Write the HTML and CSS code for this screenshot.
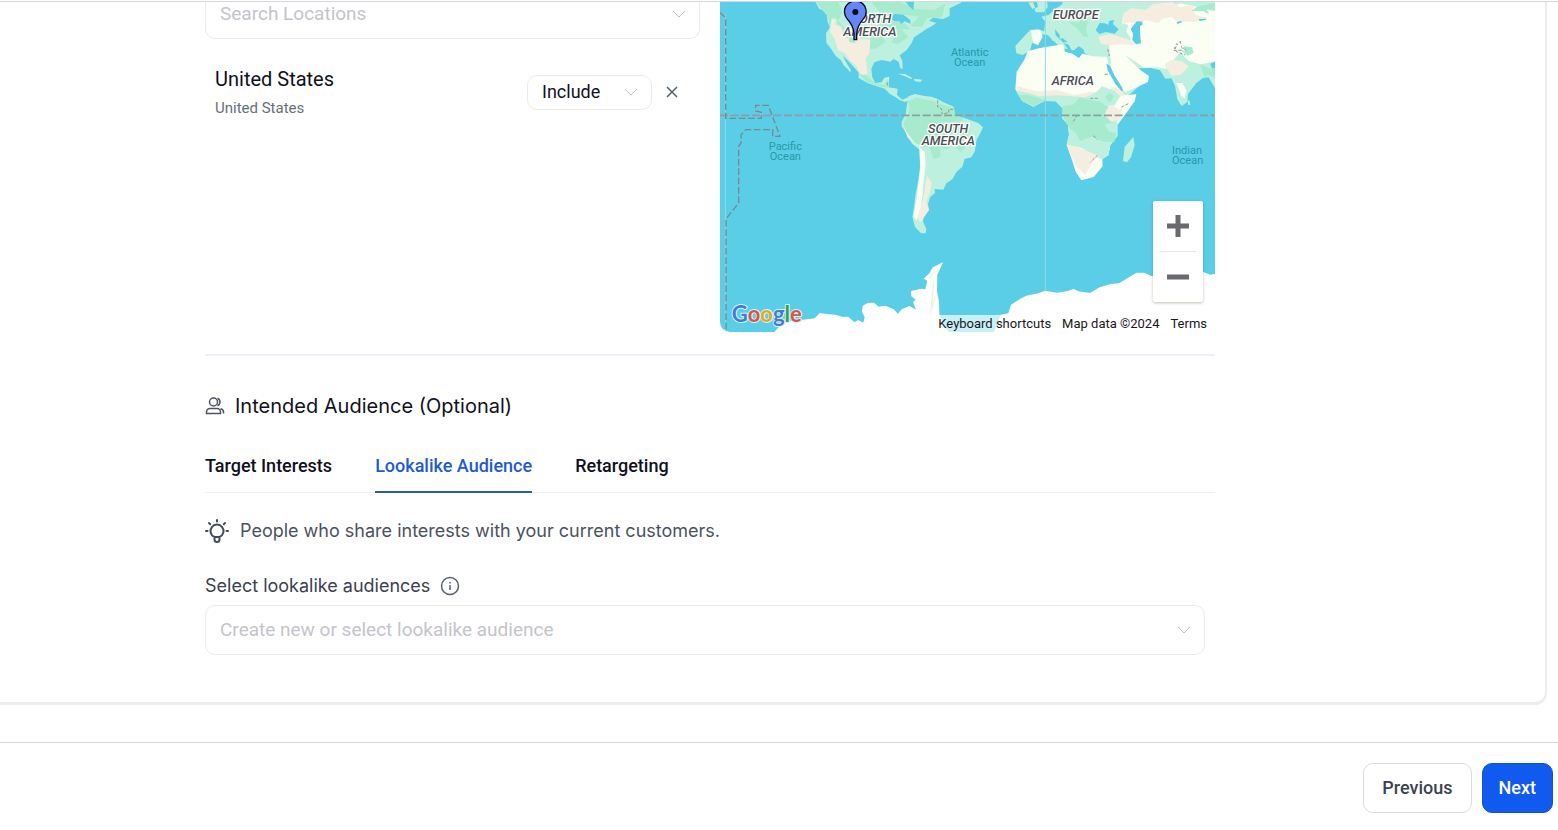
FILE: index.html
```html
<!DOCTYPE html>
<html lang="en">
<head>
<meta charset="utf-8">
<meta name="viewport" content="width=device-width, initial-scale=1">
<title>Intended Audience</title>
<link rel="stylesheet" href="styles.css">
</head>
<body>
<main class="scroll-area">
  <div class="card">
    <div class="content">
      <section class="locations">
        <div class="location-list">
          <div class="select-box search-box">
            <select class="select placeholder" aria-label="Search Locations"><option>Search Locations</option></select>
            <svg class="chevron" viewBox="0 0 14 14" aria-hidden="true"><path d="M1 4l6 6 6-6"/></svg>
          </div>
          <div class="location">
            <div class="location-name">
              <div class="name">United States</div>
              <div class="region">United States</div>
            </div>
            <div class="select-box include-box">
              <select class="select" aria-label="Include or exclude"><option>Include</option><option>Exclude</option></select>
              <svg class="chevron" viewBox="0 0 14 14" aria-hidden="true"><path d="M1 4l6 6 6-6"/></svg>
            </div>
            <button class="remove" type="button" aria-label="Remove location"><svg viewBox="0 0 12 12"><path d="M1 1l10 10M11 1L1 11"/></svg></button>
          </div>
        </div>
        <div class="map">
          <svg class="map-art" viewBox="15 6 1485 990" preserveAspectRatio="xMidYMid slice" role="img" aria-label="World map">
            <rect class="water" x="0" y="0" width="1520" height="1010"/>
            <!-- North America -->
            <path class="mint" d="M298 0L312 26L322 30L336 46L337 64L345 82L333 100L334 128L349 148L362 168L378 181L386 196L398 207L405 217L408 211L398 195L388 177L384 168L397 180L413 197L431 218L431 234L459 250L490 260L509 266L525 282L541 291L555 301L570 306L584 300L579 292L562 299L546 285L548 266L520 262L523 230L508 233L500 247L481 249L472 232L469 206L478 187L500 180L526 185L536 177L551 185L556 205L563 206L562 183L554 166L575 150L590 129L597 112L618 98L633 88L651 78L664 69L642 62L655 53L684 57L704 48L704 25L738 8L738 0Z"/>
            <path class="green" d="M302 6L370 6L382 38L366 68L378 82L404 107L408 125L452 121L463 158L466 103L505 55L530 62L560 60L585 88L540 88L502 110L512 125L485 145L459 148L436 98L392 89L359 50L344 77L338 48Z"/>
            <path class="green" d="M470 6H555L600 26L658 30L692 10L680 52L635 55L622 80L585 78L612 50L570 44L532 52L500 42Z"/>
            <path class="beige" d="M350 55L363 60L360 75L378 79L386 110L402 116L410 101L429 100L438 117L466 119L464 157L452 176L458 221L438 225L423 196L403 181L390 160L369 150L359 116L345 96Z"/>
            <path class="green" d="M402 107L413 104L422 130L402 126ZM430 221L456 227L481 250L509 255L518 238L523 263L500 261L457 247ZM553 82L580 110L548 133L530 127Z"/>
            <path class="water" d="M522 54l15-12 28 2 20 15 2 12-18-7-11 8-5-9-14 1zM597 6l-2 24-13-11-10-13z"/>
            <path class="mint" d="M549 221l21 1 22 12-4 3-18-8zM597 236l25 3-6 7-17-2z"/>
            <!-- South America -->
            <path class="mint" d="M577 306L580 289L600 282L628 288L650 290L666 296L684 306L716 320L720 344L750 355L790 369L804 382L796 400L785 419L779 455L769 472L749 477L742 500L725 515L712 538L694 550L685 569L659 567L660 579L646 591L639 612L642 630L627 648L624 665L634 687L632 700L618 700L600 681L592 650L597 620L602 581L610 540L615 500L614 449L591 431L575 402L560 379L560 365L572 343Z"/>
            <path class="green" d="M578 304L604 293L651 302L675 312L717 324L720 344L746 355L728 373L747 380L765 396L748 425L752 443L735 455L716 434L694 450L676 440L676 471L656 477L644 443L600 430L574 395L565 371L578 345L584 324Z"/>
            <path class="cream" d="M613 442L629 455L632 494L623 568L623 584L615 637L604 662L596 648L605 595L609 560L616 508Z"/>
            <path class="beige" d="M563 373L573 394L599 428L618 441L603 434L578 413ZM636 528L650 549L643 581L633 605L642 630L617 666L606 655L624 601Z"/>
            <!-- Europe and Asia -->
            <path class="mint" d="M940 8l14-2 6 17-8 4zM965 0h31l2 22-12 15-24 0-4-10 11-7zM945 90l24-3 18 7 4-29-12-15 23-6 20-18 18-12 7-14H1500V184l-14 8 14 38v35l-19-33-17 2-20 15-25 33-2 24-17 12-13-20-7-41-11-22-18 1-16-25-28-7-36 1-19-11-24-1-27-37 35 22 14 33 32 14 3 22-39 35-44 17-15-28-28-36 8-21-4-37-29-3-25-14-4-13-14-8-14 12-8 0-11-24-13-11-16-17-9-11 2 18 24 23 12 18-19-2-29-28-12-12-18-2-16 26-13 1-5 21-23 14-19-5-3-22z"/>
            <path class="cream" d="M1183 130L1202 132L1240 133L1247 113L1234 95L1240 75L1221 70L1224 48L1263 32L1315 39L1350 25L1397 10L1500 34V184L1457 193L1421 183L1395 157L1371 186L1352 207L1325 202L1287 203L1257 182L1229 165L1279 212L1302 228L1299 246L1265 262L1230 277L1211 250L1185 209L1188 185L1183 143Z"/>
            <path class="beige" d="M1150 110l34-8 45 13 32 10-6 10-33-3-36 3-28-3zM1225 40l24-15 43 4 21-16 58-6 26 15 36-7 8 29 35 10-34 11-56 0-18-15-28 7-10 13-38-10-22 12-26-6-20 7zM1348 193l21-13 30 3 22 15-12 14-12 12-27 3-11-16z"/>
            <path class="green" d="M1060 65l32 3 8-14 20 3-7 33 7 22-14-3-18-23zM1430 32l20-14 50-9v22l-25-3 7 15-18-10zM1455 193l31 13 13-3v31l-19-9-11 7zM1395 149l14-10 22 3 5 17-18 8z"/>
            <path class="cream" d="M948 91h28l7 19-14 26-13-6-5-16zM1383 249l19 0 13 23-7 24-10-10-11-31z"/>
            <path class="water" d="M1142 91l12-22 16 1 10 5 2-12 15-3-3 12 17 16-12 13-26-5-20 6zM1256 75l10-11 16 1 1 9-8 4 0 18 3 34-15 3-11-13 2-19-7-14zM1385 66l14-3 2 4-14 5zM1451 57l24-1-2 4-19 3z"/>
            <path class="mint" d="M1007 88l10 1 3 31-9 2zM1034 104l9-1-2 14-7-2zM1044 126l27 2-4 8-16-5zM1126 149l22 1-2 5-20-3zM1418 299l6 5 2 11-6 0z"/>
            <!-- Africa -->
            <path class="cream" d="M938 154L971 145L1044 133L1050 155L1072 161L1092 174L1102 161L1134 169L1176 171L1180 194L1195 231L1213 260L1221 286L1264 283L1259 304L1229 346L1207 375L1207 408L1186 436L1180 466L1162 477L1163 499L1136 531L1099 541L1082 515L1071 480L1055 435L1062 404L1059 374L1042 355L1044 326L1022 304L988 303L955 320L921 302L901 267L905 215L928 179Z"/>
            <path class="beige" d="M903 257l27 8 36 9 60-4 50 15 50-9 46-1 22-15 29 12 4 15-23 13-1 25-42 20-80-25-72-26-54-6-45-16z"/>
            <path class="mint" d="M901 270l35 8 35 11 60-3 80 6 30-13 20-20 39 14 15 15-16 28-18 0-5 22-13 11 26-5 18 0 0 30 0 33-21 29-6 29-18 12-24-5-37-28-46-10 7-30-3-30-17-19 2-29-22-22-34-1-33 17-34-18-20-32z"/>
            <path class="green" d="M910 284l33 2 48 15-36 18-34-18zM1042 338l0-20 32-4 19-21 62 12 24 17-11 24 26 19-25 9 12 20 22 6-4 25-33 0-37-15-34 13-12-23-19-15-17-31zM1170 292l14-14 13 12-12 18z"/>
            <path class="beige" d="M1056 435l37 8 32 14 29 11-20 14-23 42-25-22-14-26zM1175 328l21-9 26 5-5 34-28 7-20-19z"/>
            <path class="mint" d="M1255 411l-15 17-11 12-5 43 12 4 12-15 11-37z"/>
            <path class="water" d="M1174 190l12 9 13 28 22 35 3 13-7-4-16-19-23-41z"/>
            <path class="cream" d="M1219 288l44-3-16 24-34 21-17-11z"/>
            <!-- Antarctica -->
            <path class="snow" d="M175 1000L192 980L217 963L260 960L299 955L314 939L340 943L361 944L382 950L399 950L419 967L430 960L445 968L449 951L441 936L443 917L458 909L477 908L491 920L511 917L536 928L549 941L560 928L583 918L603 929L594 906L602 899L589 889L588 873L619 866L631 868L637 842L626 836L643 820L653 802L684 787L667 824L666 872L672 906L673 941L688 980L706 1000ZM835 1000L857 944L880 940L888 914L915 897L934 887L970 880L990 872L1027 878L1058 873L1076 867L1090 874L1125 879L1154 862L1187 852L1212 850L1237 835L1265 818L1288 818L1310 829L1465 816L1485 824L1500 822V1000Z"/>
            <path class="land-detail" d="M642 836l22-24m-8 30l-8 98m12-50l-12 44"/>
            <!-- Boundaries and grid -->
            <path class="meridian" d="M31 42V996M991 6V872"/>
            <path class="equator" d="M15 346H1500"/>
            <path class="boundary" d="M15 38l17 15v302h107v-18l-17-4v-17h38l35 93h-22v-20h-80l-15 15v25l-7 10v170l-38 48v331"/>
            <path class="border-line" d="M668 301l0 20 12 6 1 15 21-4-1-10 16 0M516 247l2 11M1178 148l5 20M1169 223h15M1376 151l22 0m-11-23l-9 13 6 14 27 10m-32-18l16-24 5 19 14 10M1087 345l-15 25M1126 295h22M1136 407l10 12M1148 465l-22 22M1240 311l-24 12"/>
            <path class="shore" d="M1375 143l8-17 15 9-3 10 15 7"/>
            <g class="continent">
              <text x="407" y="69">NORTH</text><text x="385" y="108">AMERICA</text>
              <text x="639" y="398">SOUTH</text><text x="620" y="434">AMERICA</text>
              <text x="1013" y="58">EUROPE</text><text x="1010" y="254">AFRICA</text>
            </g>
            <g class="ocean">
              <text x="211" y="451">Pacific</text><text x="211" y="481">Ocean</text>
              <text x="764" y="168">Atlantic</text><text x="764" y="198">Ocean</text>
              <text x="1416" y="461">Indian</text><text x="1418" y="491">Ocean</text>
            </g>
            <path class="pin" d="M417 119V99C414 79 407 67 396 56C388 47 386 31 392 20C406-3 438-2 450 20C456 34 454 48 444 58C433 70 427 84 425 101V119Z"/>
            <circle class="pin-dot" cx="421" cy="36" r="9"/>
            <text class="google" x="50" y="967"><tspan class="g-blue">G</tspan><tspan class="g-red">o</tspan><tspan class="g-yellow">o</tspan><tspan class="g-blue">g</tspan><tspan class="g-green">l</tspan><tspan class="g-red">e</tspan></text>
          </svg>
          <div class="zoom-control">
            <button type="button" aria-label="Zoom in"><svg viewBox="0 0 24 24"><path d="M1 12h22M12 1v22"/></svg></button>
            <button type="button" aria-label="Zoom out"><svg viewBox="0 0 24 24"><path d="M1 12h22"/></svg></button>
          </div>
          <div class="map-credits">
            <button type="button">Keyboard shortcuts</button><span>Map data ©2024</span><a href="#terms">Terms</a>
          </div>
        </div>
      </section>

      <section class="audience">
        <h2 class="heading">
          <svg class="people" viewBox="0 0 20 20" aria-hidden="true"><circle cx="8.500" cy="6" r="4"/><path d="M12.500 2.300a4 4 0 0 1 0 7.400M1.500 17.500v-1.500a3.500 3.500 0 0 1 3.500-3.500h7a3.500 3.500 0 0 1 3.500 3.500v1.500zM15.500 12.800c2 .5 3 1.700 3 3.200v1.500"/></svg>
          Intended Audience (Optional)
        </h2>
        <div class="tabs" role="tablist">
          <button class="tab" role="tab" type="button">Target Interests</button>
          <button class="tab active" role="tab" type="button" aria-selected="true">Lookalike Audience</button>
          <button class="tab" role="tab" type="button">Retargeting</button>
        </div>
        <p class="hint">
          <svg class="bulb" viewBox="0 0 24 24" aria-hidden="true"><path d="M12 1v1.500M1 12h1.500M21.500 12H23M4 4l1.200 1.200M20 4l-1.200 1.200M9.500 18a6.500 6.500 0 1 1 5 0M9.500 18h5v2.500a2.500 2.500 0 0 1-5 0z"/></svg>
          People who share interests with your current customers.
        </p>
        <div class="field-label">
          <label for="lookalike">Select lookalike audiences</label>
          <svg class="info" viewBox="0 0 20 20" aria-hidden="true"><circle cx="10" cy="10" r="8.500"/><path d="M10 9v5M10 6v1.500"/></svg>
        </div>
        <div class="select-box audience-box">
          <select class="select placeholder" id="lookalike"><option>Create new or select lookalike audience</option></select>
          <svg class="chevron" viewBox="0 0 14 14" aria-hidden="true"><path d="M1 4l6 6 6-6"/></svg>
        </div>
      </section>
    </div>
  </div>
</main>
<footer class="actions">
  <button class="btn" type="button">Previous</button>
  <button class="btn primary" type="button">Next</button>
</footer>
</body>
</html>
```

FILE: styles.css
```css
* { box-sizing: border-box; }
body {
  margin: 0;
  padding-top: 1px;
  min-height: 100vh;
  display: flex;
  flex-direction: column;
  background: #fff;
  color: #101020;
  font-family: Roboto, "Liberation Sans", sans-serif;
}
button, select { font: inherit; color: inherit; }
button { padding: 0; border: 0; background: none; }
svg { fill: none; flex: none; }
.scroll-area { flex: 1; border-top: 1px solid #d5d7da; padding: 0 11px 37px 0; }
.card {
  border-right: 2px solid #ebecef;
  border-bottom: 3px solid #ebecef;
  border-radius: 0 0 12px 0;
  padding: 0 330px 47px 205px;
}
.content { max-width: 1010px; }
.locations { display: flex; gap: 20px; padding-bottom: 22px; border-bottom: 2px solid #efeffb; }
.location-list, .map { flex: 1; min-width: 0; }

.select-box { position: relative; border: 1px solid #ebebe6; border-radius: 10px; }
.select {
  display: block;
  width: 100%;
  height: 100%;
  padding: 0 40px 2px 14px;
  border: 0;
  background: transparent;
  appearance: none;
  font-size: 18px;
}
.placeholder { color: #c4c4cb; font-size: 19px; }
.chevron {
  position: absolute;
  right: 13px;
  top: 50%;
  width: 14px;
  height: 14px;
  margin-top: -7px;
  stroke: #bbbec4;
  pointer-events: none;
}
.search-box { height: 37px; border-top: 0; border-radius: 0 0 10px 10px; }
.search-box .select { padding-bottom: 13px; }
.search-box .chevron { top: 12px; margin-top: -7px; }
.location { display: flex; align-items: center; padding: 26px 22px 0 10px; }
.location-name { flex: 1; }
.name { font-size: 20px; line-height: 28px; }
.region { margin-top: 4px; font-size: 15px; line-height: 22px; color: #667078; }
.include-box { width: 125px; height: 35px; }
.remove { margin-left: 14px; width: 12px; height: 12px; display: flex; }
.remove svg { width: 12px; height: 12px; stroke: #566170; stroke-width: 1.500; }

.map { position: relative; height: 330px; border-radius: 0 0 0 10px; overflow: hidden; }
.map-art { display: block; width: 100%; height: 100%; }
.water { fill: #59cee6; }
.mint { fill: #bdf0de; }
.green { fill: #a6ebcd; }
.beige { fill: #f5eee0; }
.cream { fill: #fbfef2; }
.snow { fill: #fff; }
.land-detail { stroke: #edf3e4; stroke-width: 4; }
.meridian { stroke: #8bdde6; stroke-width: 3; }
.equator { stroke: #8ca0a1; stroke-width: 5; stroke-dasharray: 24 8; }
.boundary { stroke: #7b888b; stroke-width: 4; stroke-dasharray: 20 8; }
.border-line { stroke: #919894; stroke-width: 3; stroke-dasharray: 9 5; }
.shore { stroke: #fff; stroke-width: 4; }
.continent { font: italic 500 38px Roboto, sans-serif; fill: #4a4e53; stroke: #fff; stroke-width: 8; paint-order: stroke; }
.ocean { font: 400 33px Roboto, sans-serif; fill: #2699a8; text-anchor: middle; }
.pin { fill: #6387f5; stroke: #080818; stroke-width: 4; }
.pin-dot { fill: #080818; }
.google { font: 700 66px Lato, sans-serif; stroke: #d8f7fb; stroke-width: 6; paint-order: stroke; }
.g-blue { fill: #4579d8; }
.g-red { fill: #df5144; }
.g-yellow { fill: #e9a817; }
.g-green { fill: #389b5a; }
.zoom-control {
  position: absolute;
  right: 12px;
  bottom: 30px;
  width: 50px;
  display: flex;
  flex-direction: column;
  background: #fff;
  border-radius: 2px;
  box-shadow: 0 1px 3px rgb(80 70 40 / 35%);
}
.zoom-control button { height: 50px; display: flex; align-items: center; justify-content: center; }
.zoom-control button + button { height: 51px; }
.zoom-control button + button::before { content: ""; position: absolute; top: 50px; left: 6px; right: 7px; border-top: 1px solid #e8e7e2; }
.zoom-control svg { width: 24px; height: 24px; stroke: #69696f; stroke-width: 5; }
.map-credits {
  position: absolute;
  right: 0;
  bottom: 0;
  display: flex;
  gap: 11px;
  padding: 0 8px 0 5px;
  background: rgb(255 255 255 / 68%);
  font-size: 13px;
  line-height: 17px;
  color: #17171c;
}
.map-credits a { color: inherit; text-decoration: none; }

.heading { display: flex; align-items: center; gap: 10px; margin: 36px 0 0; font: 400 20px/28px Inter, sans-serif; }
.people { width: 20px; height: 20px; stroke: #4b5565; stroke-width: 1.500; }
.tabs { display: flex; gap: 43px; margin-top: 28px; border-bottom: 1px solid #efeff5; }
.tab { height: 45px; padding-bottom: 8px; margin-bottom: -1px; border-bottom: 2px solid transparent; font-size: 18px; font-weight: 500; }
.tab.active { color: #1f5bd0; border-color: #285bb5; }
.hint { display: flex; align-items: center; gap: 11px; margin: 26px 0 0; font: 400 18px/24px Inter, sans-serif; color: #4b5160; }
.bulb { width: 24px; height: 24px; stroke: #414d5d; stroke-width: 2; stroke-linecap: round; }
.field-label { display: flex; align-items: center; gap: 10px; margin-top: 31px; font: 400 18px/24px Inter, sans-serif; color: #3c4050; }
.info { width: 20px; height: 20px; stroke: #566170; stroke-width: 1.500; }
.audience-box { height: 50px; margin: 7px 10px 0 0; }

.actions { display: flex; justify-content: flex-end; gap: 10px; padding: 20px 5px 17px; border-top: 1px solid #d5d7da; }
.btn { height: 50px; padding: 0 18px 2px; border: 1px solid #d7dce0; border-radius: 10px; font-size: 18px; font-weight: 500; color: #3b4251; }
.primary { padding: 0 16px 2px; border-color: #1251cf; background: #105af0; color: #fff; }
```
